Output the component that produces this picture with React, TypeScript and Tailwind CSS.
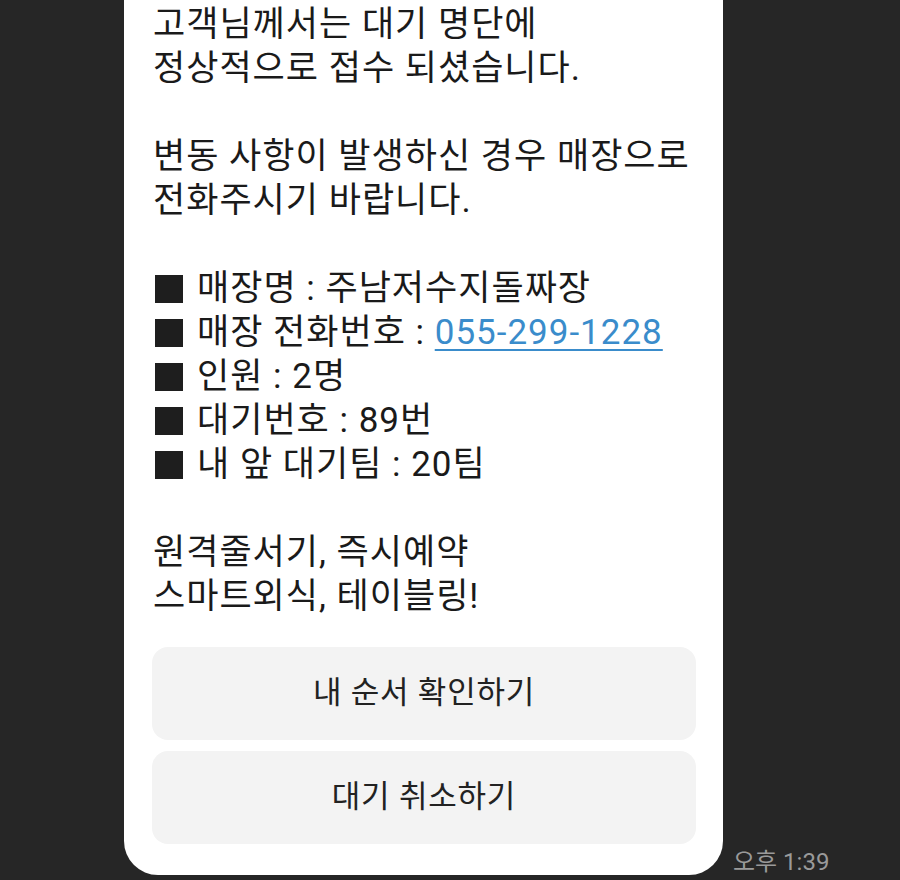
import React from "react";

const font = { fontFamily: "Roboto, 'Noto Sans CJK KR', sans-serif" };

function Bullet({ children }: { children: React.ReactNode }) {
  return (
    <div className="flex items-center">
      <span className="inline-block w-[28px] h-[28px] bg-[#1e1e1e] ml-[2px] mr-[14px]" />
      <span>{children}</span>
    </div>
  );
}

export default function App() {
  return (
    <div className="w-[900px] h-[880px] bg-[#262626] overflow-hidden" style={font}>
      <div className="flex items-end">
        <div className="ml-[124px] w-[599px] h-[875px] bg-white rounded-b-[34px] flex flex-col">
          <div className="pl-[29px] pt-[3px] text-[35px] leading-[44px] text-[#1a1a1a] tracking-[1px]">
            <div>고객님께서는 대기 명단에</div>
            <div>정상적으로 접수 되셨습니다.</div>
            <div className="h-[44px]" />
            <div>변동 사항이 발생하신 경우 매장으로</div>
            <div>전화주시기 바랍니다.</div>
            <div className="h-[44px]" />
            <Bullet>매장명 : 주남저수지돌짜장</Bullet>
            <Bullet>
              매장 전화번호 :{" "}
              <span className="text-[#3a8ccb] underline underline-offset-[5px] decoration-[2px]">055-299-1228</span>
            </Bullet>
            <Bullet>인원 : 2명</Bullet>
            <Bullet>대기번호 : 89번</Bullet>
            <Bullet>내 앞 대기팀 : 20팀</Bullet>
            <div className="h-[44px]" />
            <div>원격줄서기, 즉시예약</div>
            <div>스마트외식, 테이블링!</div>
          </div>
          <div className="mt-[28px] pl-[28px] pr-[27px] flex flex-col gap-[11px]">
            <div className="h-[93px] rounded-[16px] bg-[#f3f3f3] flex items-center justify-center text-[31px] tracking-[0.8px] text-[#222]">
              내 순서 확인하기
            </div>
            <div className="h-[93px] rounded-[16px] bg-[#f3f3f3] flex items-center justify-center text-[31px] tracking-[0.8px] text-[#222]">
              대기 취소하기
            </div>
          </div>
        </div>
        <div className="ml-[10px] mb-[-2px] text-[24px] leading-[30px] text-[#9a9a9a]">오후 1:39</div>
      </div>
    </div>
  );
}
